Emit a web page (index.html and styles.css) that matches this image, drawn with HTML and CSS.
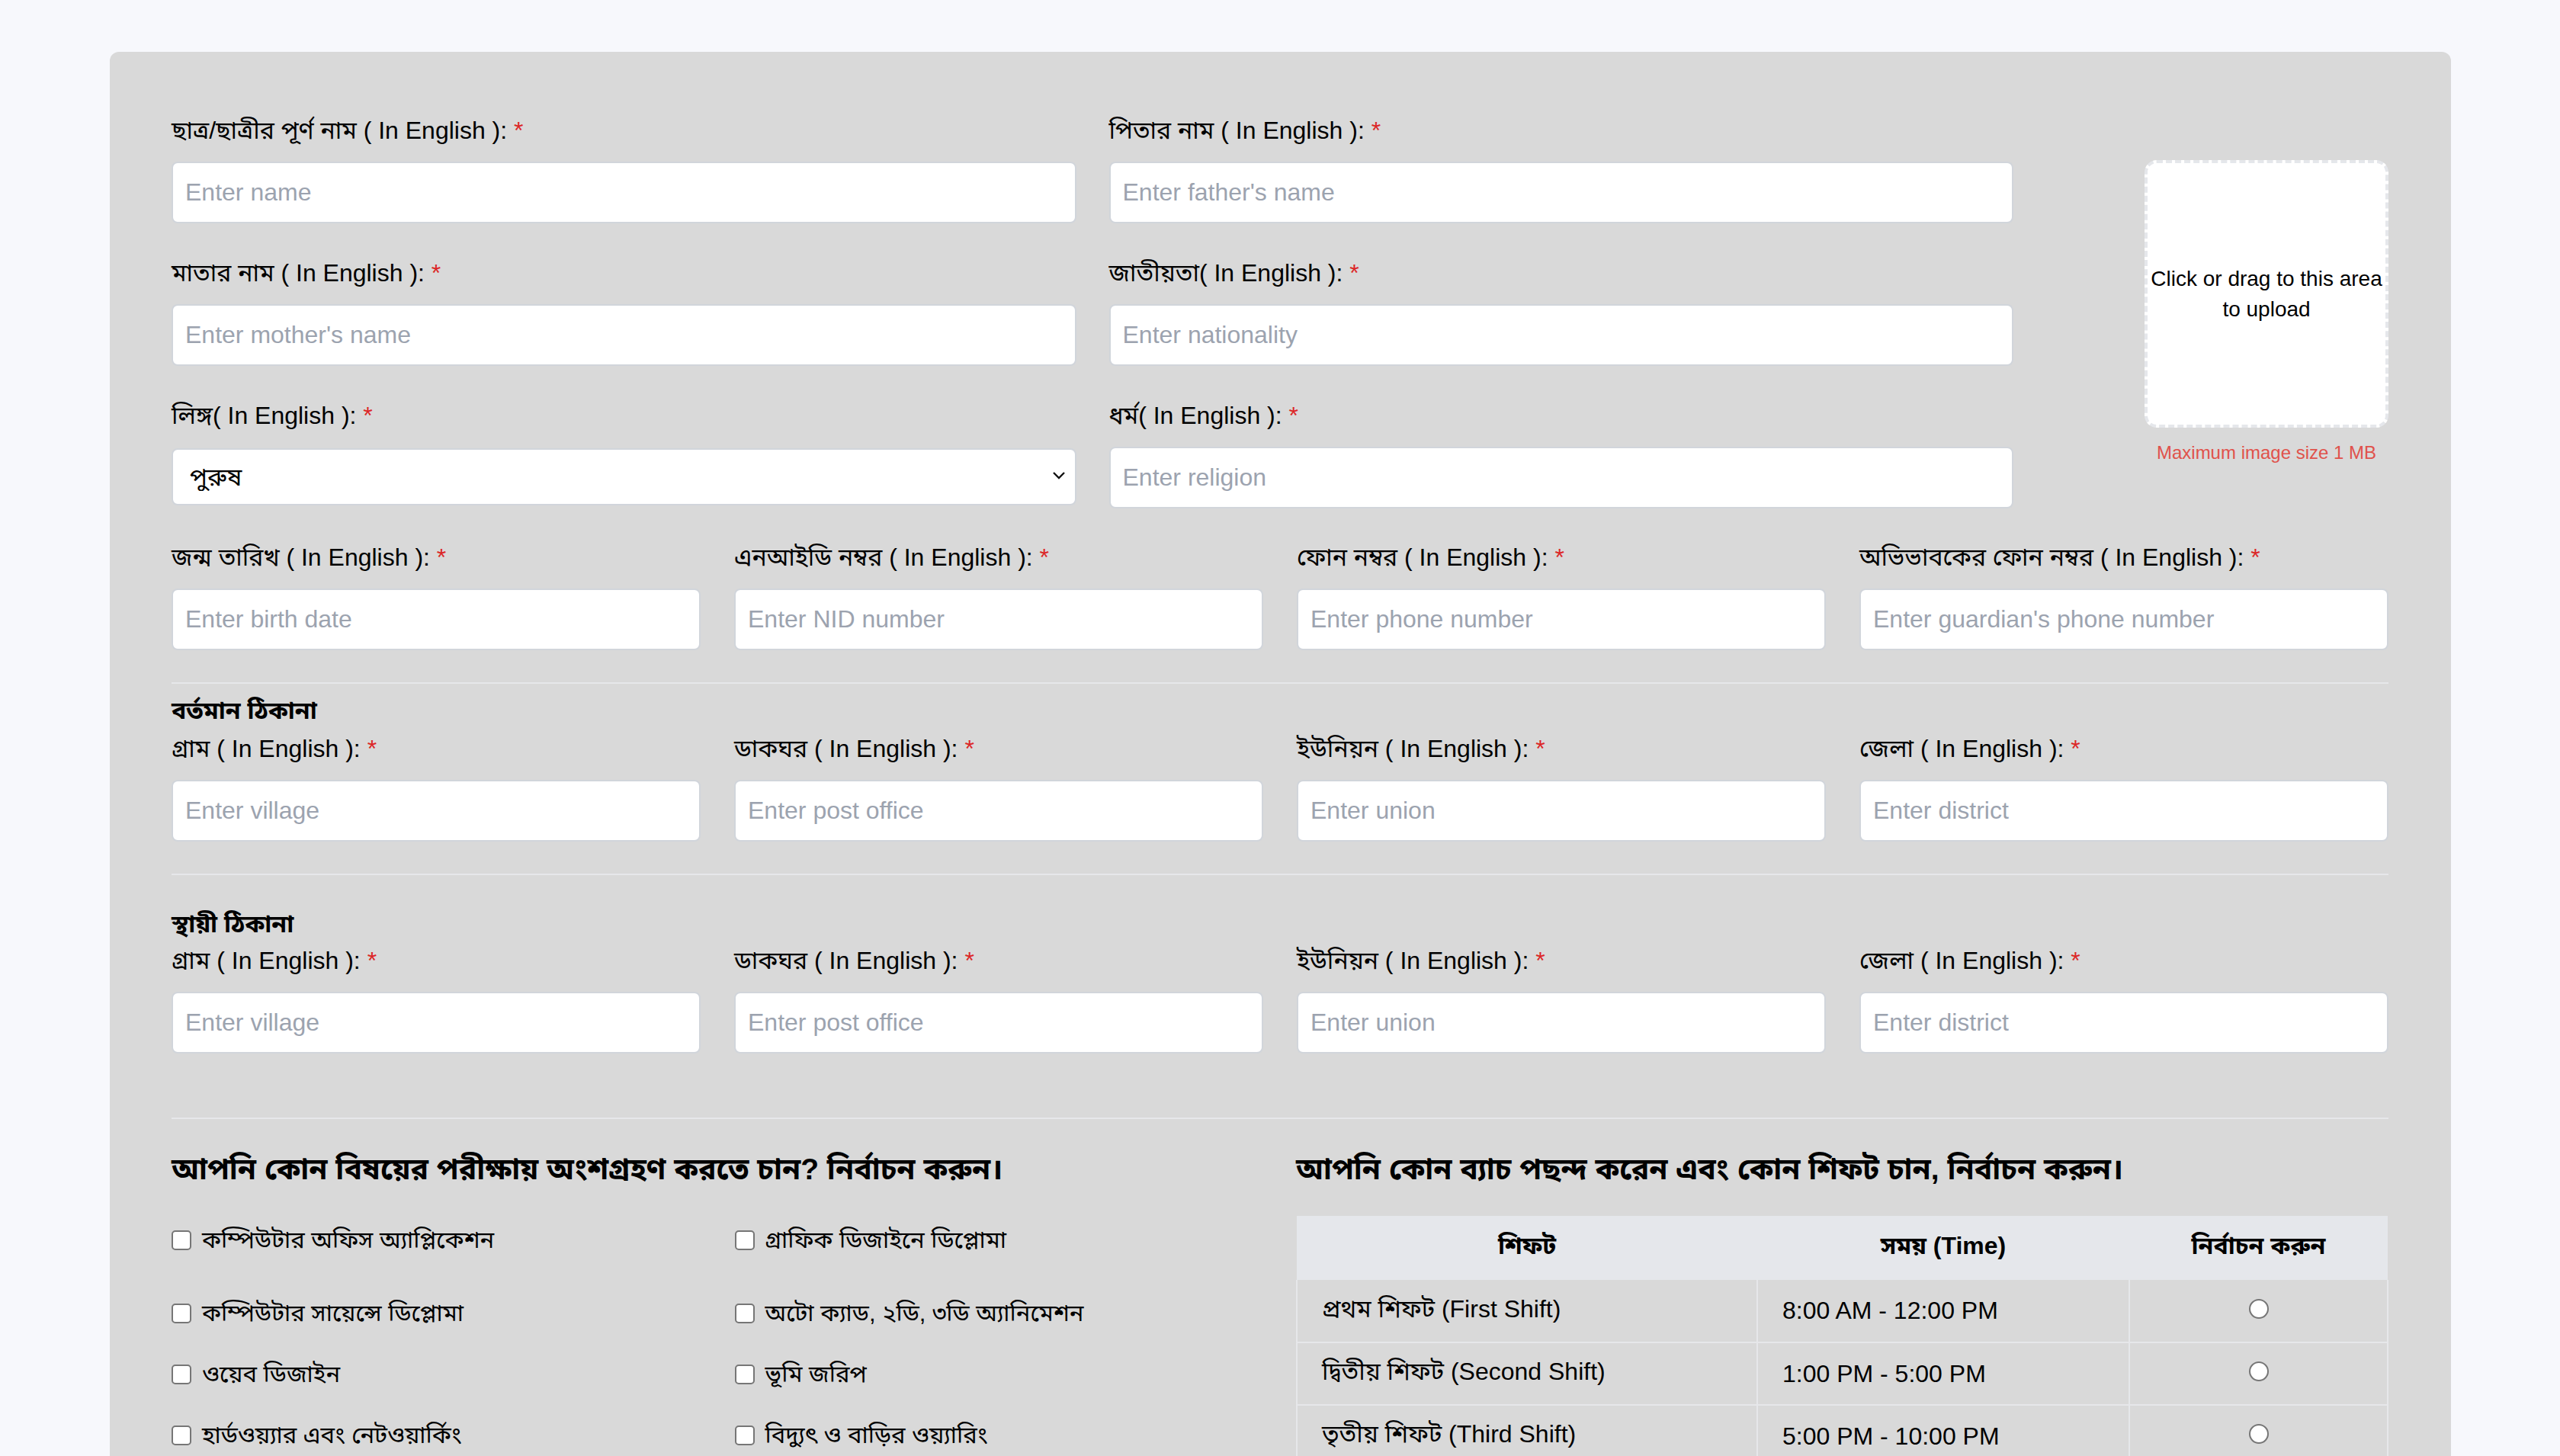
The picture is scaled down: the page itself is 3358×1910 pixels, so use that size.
FILE: index.html
```html
<!DOCTYPE html>
<html lang="bn">
<head>
<meta charset="utf-8">
<title>Admission Form</title>
<link rel="stylesheet" href="styles.css">
</head>
<body>
<div class="page">
  <form class="card">
    <div class="top">
      <div class="top-fields">
        <div class="field">
          <label class="label">ছাত্র/ছাত্রীর পূর্ণ নাম ( In English ): <span class="req">*</span></label>
          <input class="input" type="text" placeholder="Enter name">
        </div>
        <div class="field">
          <label class="label">পিতার নাম ( In English ): <span class="req">*</span></label>
          <input class="input" type="text" placeholder="Enter father's name">
        </div>
        <div class="field">
          <label class="label">মাতার নাম ( In English ): <span class="req">*</span></label>
          <input class="input" type="text" placeholder="Enter mother's name">
        </div>
        <div class="field">
          <label class="label">জাতীয়তা( In English ): <span class="req">*</span></label>
          <input class="input" type="text" placeholder="Enter nationality">
        </div>
        <div class="field">
          <label class="label">লিঙ্গ( In English ): <span class="req">*</span></label>
          <div class="select-wrap">
            <select class="select">
              <option>পুরুষ</option>
              <option>মহিলা</option>
            </select>
            <svg class="chevron" width="18" height="12" viewBox="0 0 18 12"><path d="M2 2 L9 9 L16 2" fill="none" stroke="#111" stroke-width="2.4"/></svg>
          </div>
        </div>
        <div class="field">
          <label class="label">ধর্ম( In English ): <span class="req">*</span></label>
          <input class="input" type="text" placeholder="Enter religion">
        </div>
      </div>
      <div class="upload-col">
        <div class="upload">Click or drag to this area to upload</div>
        <p class="upload-note">Maximum image size 1 MB</p>
      </div>
    </div>

    <div class="grid4 row-personal">
      <div class="field">
        <label class="label">জন্ম তারিখ ( In English ): <span class="req">*</span></label>
        <input class="input" type="text" placeholder="Enter birth date">
      </div>
      <div class="field">
        <label class="label">এনআইডি নম্বর ( In English ): <span class="req">*</span></label>
        <input class="input" type="text" placeholder="Enter NID number">
      </div>
      <div class="field">
        <label class="label">ফোন নম্বর ( In English ): <span class="req">*</span></label>
        <input class="input" type="text" placeholder="Enter phone number">
      </div>
      <div class="field">
        <label class="label">অভিভাবকের ফোন নম্বর ( In English ): <span class="req">*</span></label>
        <input class="input" type="text" placeholder="Enter guardian's phone number">
      </div>
    </div>

    <hr class="divider div-1">
    <h3 class="section-title st-1">বর্তমান ঠিকানা</h3>
    <div class="grid4">
      <div class="field">
        <label class="label">গ্রাম ( In English ): <span class="req">*</span></label>
        <input class="input" type="text" placeholder="Enter village">
      </div>
      <div class="field">
        <label class="label">ডাকঘর ( In English ): <span class="req">*</span></label>
        <input class="input" type="text" placeholder="Enter post office">
      </div>
      <div class="field">
        <label class="label">ইউনিয়ন ( In English ): <span class="req">*</span></label>
        <input class="input" type="text" placeholder="Enter union">
      </div>
      <div class="field">
        <label class="label">জেলা ( In English ): <span class="req">*</span></label>
        <input class="input" type="text" placeholder="Enter district">
      </div>
    </div>

    <hr class="divider div-2">
    <h3 class="section-title st-2">স্থায়ী ঠিকানা</h3>
    <div class="grid4">
      <div class="field">
        <label class="label">গ্রাম ( In English ): <span class="req">*</span></label>
        <input class="input" type="text" placeholder="Enter village">
      </div>
      <div class="field">
        <label class="label">ডাকঘর ( In English ): <span class="req">*</span></label>
        <input class="input" type="text" placeholder="Enter post office">
      </div>
      <div class="field">
        <label class="label">ইউনিয়ন ( In English ): <span class="req">*</span></label>
        <input class="input" type="text" placeholder="Enter union">
      </div>
      <div class="field">
        <label class="label">জেলা ( In English ): <span class="req">*</span></label>
        <input class="input" type="text" placeholder="Enter district">
      </div>
    </div>

    <hr class="divider div-3">

    <div class="bottom">
      <section class="subjects">
        <h2 class="heading">আপনি কোন বিষয়ের পরীক্ষায় অংশগ্রহণ করতে চান? নির্বাচন করুন।</h2>
        <div class="checks">
          <label class="check first"><input type="checkbox" class="cb"><span>কম্পিউটার অফিস অ্যাপ্লিকেশন</span></label>
          <label class="check first"><input type="checkbox" class="cb"><span>গ্রাফিক ডিজাইনে ডিপ্লোমা</span></label>
          <label class="check"><input type="checkbox" class="cb"><span>কম্পিউটার সায়েন্সে ডিপ্লোমা</span></label>
          <label class="check"><input type="checkbox" class="cb"><span>অটো ক্যাড, ২ডি, ৩ডি অ্যানিমেশন</span></label>
          <label class="check"><input type="checkbox" class="cb"><span>ওয়েব ডিজাইন</span></label>
          <label class="check"><input type="checkbox" class="cb"><span>ভূমি জরিপ</span></label>
          <label class="check"><input type="checkbox" class="cb"><span>হার্ডওয়্যার এবং নেটওয়ার্কিং</span></label>
          <label class="check"><input type="checkbox" class="cb"><span>বিদ্যুৎ ও বাড়ির ওয়্যারিং</span></label>
        </div>
      </section>
      <section class="shifts">
        <h2 class="heading">আপনি কোন ব্যাচ পছন্দ করেন এবং কোন শিফট চান, নির্বাচন করুন।</h2>
        <table class="shift-table">
          <thead>
            <tr><th class="c1">শিফট</th><th class="c2">সময় (Time)</th><th class="c3">নির্বাচন করুন</th></tr>
          </thead>
          <tbody>
            <tr><td>প্রথম শিফট (First Shift)</td><td>8:00 AM - 12:00 PM</td><td class="center"><input type="radio" name="shift" class="rd"></td></tr>
            <tr><td>দ্বিতীয় শিফট (Second Shift)</td><td>1:00 PM - 5:00 PM</td><td class="center"><input type="radio" name="shift" class="rd"></td></tr>
            <tr><td>তৃতীয় শিফট (Third Shift)</td><td>5:00 PM - 10:00 PM</td><td class="center"><input type="radio" name="shift" class="rd"></td></tr>
          </tbody>
        </table>
      </section>
    </div>
  </form>
</div>
</body>
</html>
```

FILE: styles.css
```css
* { box-sizing: border-box; }

html, body {
  margin: 0;
  padding: 0;
  background: #f7f8fc;
  font-family: "Liberation Sans", "Noto Sans Bengali", "Noto Sans", sans-serif;
  color: #000;
}

.page {
  padding: 68px 143px 0 144px;
}

.card {
  background: #d9d9d9;
  border-radius: 12px 12px 0 0;
  padding: 79px 82px 80px 81px;
}

.top {
  display: flex;
  align-items: flex-start;
}

.top-fields {
  width: 2416px;
  display: grid;
  grid-template-columns: 1fr 1fr;
  column-gap: 43px;
  row-gap: 41px;
}

.field {
  display: flex;
  flex-direction: column;
}

.label {
  display: block;
  height: 48px;
  font-size: 32px;
  line-height: 48px;
  margin-bottom: 17px;
  white-space: nowrap;
  overflow: visible;
}

.req {
  color: #dc2626;
}

.input {
  height: 81px;
  width: 100%;
  border: 2px solid #d1d5db;
  border-radius: 8px;
  background: #fff;
  padding: 0 16px;
  font-family: inherit;
  font-size: 32px;
  color: #111;
  outline: none;
}

.input::placeholder {
  color: #9ca3af;
}

.select-wrap {
  position: relative;
  margin-top: 2px;
}

.select {
  appearance: none;
  -webkit-appearance: none;
  display: block;
  width: 100%;
  height: 75px;
  border: 2px solid #d1d5db;
  border-radius: 8px;
  background: #fff;
  padding: 0 22px;
  font-family: inherit;
  font-size: 32px;
  color: #000;
  outline: none;
}

.chevron {
  position: absolute;
  right: 14px;
  top: 30px;
}

.upload-col {
  margin-left: auto;
  padding-top: 63px;
  width: 320px;
  display: flex;
  flex-direction: column;
  align-items: center;
}

.upload {
  width: 320px;
  height: 351px;
  background: #fff;
  border: 4px dashed #e5e7eb;
  border-radius: 16px;
  display: flex;
  align-items: center;
  justify-content: center;
  text-align: center;
  font-size: 28px;
  line-height: 40px;
  padding: 0 4px;
}

.upload-note {
  margin: 18px 0 0;
  font-size: 24px;
  line-height: 30px;
  color: #e0524b;
}

.grid4 {
  display: grid;
  grid-template-columns: repeat(4, 1fr);
  column-gap: 44px;
}

.row-personal {
  margin-top: 40px;
}

.divider {
  border: none;
  height: 2px;
  background: #e6e7ea;
  margin: 42px 0 0;
}

.section-title {
  margin: 0;
  height: 48px;
  font-size: 32px;
  line-height: 48px;
  font-weight: 700;
}

.st-1 { margin-top: 11px; margin-bottom: 2px; }
.st-2 { margin-top: 40px; margin-bottom: 0; }

.div-3 { margin-top: 84px; }

.bottom {
  display: grid;
  grid-template-columns: 1fr 1fr;
  column-gap: 42px;
}

.heading {
  margin: 36px 0 0;
  height: 60px;
  font-size: 39px;
  line-height: 60px;
  font-weight: 700;
  white-space: nowrap;
}

.checks {
  margin-top: 39px;
  display: grid;
  grid-template-columns: 1fr 1fr;
  column-gap: 44px;
  row-gap: 32px;
}

.check {
  display: flex;
  align-items: center;
  height: 48px;
  font-size: 31px;
  line-height: 48px;
}

.check.first {
  margin-bottom: 16px;
}

.cb {
  appearance: none;
  -webkit-appearance: none;
  width: 26px;
  height: 26px;
  margin: 0 14px 0 0;
  border: 2px solid #767676;
  border-radius: 5px;
  background: #fff;
  flex: none;
}

.shift-table {
  margin-top: 31px;
  width: 100%;
  border-collapse: collapse;
  font-size: 32px;
}

.shift-table th {
  background: #e5e7eb;
  height: 84px;
  font-weight: 700;
  text-align: center;
  padding: 0 32px;
}

.shift-table .c1 { width: 604px; }
.shift-table .c2 { width: 488px; }

.shift-table td {
  height: 82px;
  padding: 0 32px;
  border: 2px solid #e6e7ea;
  border-top: none;
}

.shift-table td.center {
  text-align: center;
}

.rd {
  appearance: none;
  -webkit-appearance: none;
  display: block;
  width: 26px;
  height: 26px;
  margin: -6px auto 0;
  border: 2px solid #767676;
  border-radius: 50%;
  background: #fff;
}
```
